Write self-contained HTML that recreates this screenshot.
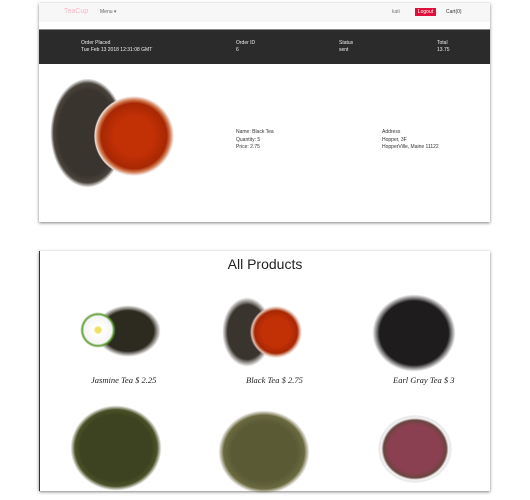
<!DOCTYPE html>
<html><head><meta charset="utf-8"><style>
body{margin:0;width:530px;height:500px;background:#fff;position:relative;overflow:hidden;font-family:"Liberation Sans",sans-serif}
.a{position:absolute}
.s{font-size:5px;color:#333;line-height:7.5px}
.w{color:#eee;font-size:5px;line-height:7px}
.pile{position:absolute;border-radius:50%}
.cap{position:absolute;font-family:"Liberation Serif",serif;font-style:italic;font-size:8.5px;color:#222}
</style></head><body>
<div class="a" style="left:39px;top:3px;width:451px;height:219px;background:#fff;box-shadow:0 1px 3px rgba(0,0,0,.5)"></div>
<div class="a" style="left:39px;top:3px;width:451px;height:19px;background:#f7f7f7"></div>
<div class="a" style="left:64px;top:8px;font-size:7px;color:#f9b8c8">TeaCup</div>
<div class="a" style="left:100px;top:9px;font-size:5px;color:#666">Menu ▾</div>
<div class="a" style="left:392px;top:9px;font-size:5px;color:#777">kati</div>
<div class="a" style="left:415px;top:8px;width:21px;height:8px;background:#e0103c;color:#fff;font-size:5px;line-height:8px;text-align:center">Logout</div>
<div class="a" style="left:446px;top:9px;font-size:5px;color:#333">Cart(0)</div>
<div class="a" style="left:39px;top:29px;width:451px;height:34px;background:#2b2b2b;border-top:1px solid #888"></div>
<div class="a w" style="left:81px;top:40px">Order Placed<br>Tue Feb 13 2018 12:31:08 GMT</div>
<div class="a w" style="left:236px;top:40px">Order ID<br>6</div>
<div class="a w" style="left:339px;top:40px">Status<br>sent</div>
<div class="a w" style="left:437px;top:40px">Total<br>13.75</div>
<div class="pile" style="left:50px;top:78px;width:75px;height:110px;background:radial-gradient(#3a342e 55%,#4a443c 64%,rgba(80,70,60,0) 70%)"></div>
<div class="pile" style="left:94px;top:96px;width:80px;height:80px;background:radial-gradient(#c23005 35%,#a72804 58%,#d27a50 64%,#efe0d8 69%,rgba(255,255,255,0) 71%)"></div>
<div class="a s" style="left:236px;top:129px">Name: Black Tea<br>Quantity: 5<br>Price: 2.75</div>
<div class="a s" style="left:382px;top:129px">Address<br>Hopper, 3F<br>HopperVille, Maine 11122</div>

<div class="a" style="left:39px;top:251px;width:450px;height:240px;background:#fff;border-left:1px solid #333;box-shadow:0 1px 3px rgba(0,0,0,.5)"></div>
<div class="a" style="left:0;width:530px;top:256px;text-align:center;font-size:14px;color:#222">All Products</div>
<div class="pile" style="left:95px;top:305px;width:66px;height:52px;background:radial-gradient(#2d2a20 55%,rgba(60,50,40,0) 70%)"></div>
<div class="pile" style="left:80px;top:312px;width:36px;height:36px;background:radial-gradient(#f0e060 10%,#fff 18%,#f4f4f4 55%,#5a9a30 62%,rgba(255,255,255,0) 70%)"></div>
<div class="pile" style="left:222px;top:297px;width:50px;height:70px;background:radial-gradient(#3a342e 55%,rgba(60,50,40,0) 70%)"></div>
<div class="pile" style="left:250px;top:306px;width:52px;height:52px;background:radial-gradient(#c23005 40%,#a72804 58%,#e6c0b0 66%,rgba(255,255,255,0) 71%)"></div>
<div class="pile" style="left:372px;top:294px;width:84px;height:78px;background:radial-gradient(#1e1c1c 58%,rgba(30,28,28,0) 70%)"></div>
<div class="cap" style="left:91px;top:375px">Jasmine Tea $ 2.25</div>
<div class="cap" style="left:246px;top:375px">Black Tea $ 2.75</div>
<div class="cap" style="left:393px;top:375px">Earl Gray Tea $ 3</div>
<div class="pile" style="left:70px;top:405px;width:92px;height:86px;background:radial-gradient(#3d4320 55%,#4a5228 63%,rgba(70,80,40,0) 70%)"></div>
<div class="pile" style="left:218px;top:410px;width:92px;height:84px;background:radial-gradient(#5a5a35 50%,#6b6a40 62%,rgba(100,100,60,0) 70%)"></div>
<div class="pile" style="left:378px;top:415px;width:74px;height:68px;background:radial-gradient(#8a4050 50%,#6a4540 60%,#f2f2f2 64%,#e8e8e8 69%,rgba(255,255,255,0) 71%)"></div>
</body></html>
